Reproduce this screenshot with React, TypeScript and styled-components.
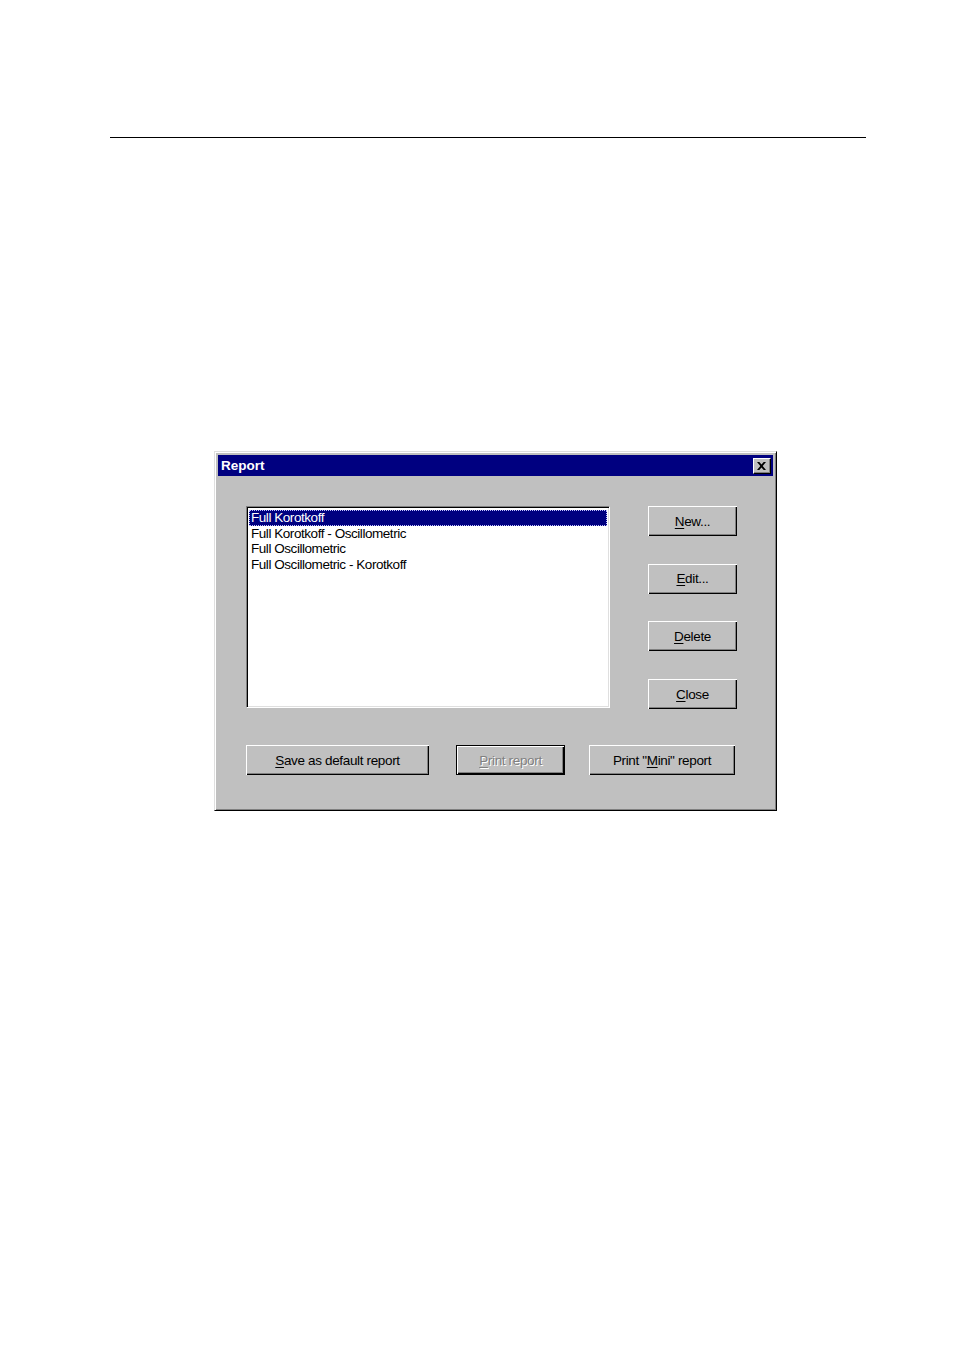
import React from 'react'
import styled, { createGlobalStyle } from 'styled-components'

const GlobalStyle = createGlobalStyle`
  html, body {
    margin: 0;
    padding: 0;
    background: #ffffff;
  }
  body {
    font-family: "Liberation Sans", Arial, sans-serif;
  }
`

const Page = styled.div`
  width: 954px;
  height: 1351px;
  padding-top: 137px;
  box-sizing: border-box;
  display: flex;
  flex-direction: column;
  align-items: flex-start;
`

const Rule = styled.div`
  margin-left: 110px;
  width: 756px;
  height: 1px;
  background: #000;
`

const Dialog = styled.div`
  margin-top: 313px;
  margin-left: 214px;
  width: 563px;
  height: 360px;
  box-sizing: border-box;
  background: #c0c0c0;
  border-top: 1px solid #dfdfdf;
  border-left: 1px solid #dfdfdf;
  border-right: 1px solid #000;
  border-bottom: 1px solid #000;
  box-shadow: inset 1px 1px 0 #fff, inset -1px -1px 0 #808080;
  padding: 3px;
  display: flex;
  flex-direction: column;
`

const TitleBar = styled.div`
  height: 21px;
  background: #000080;
  display: flex;
  align-items: center;
  justify-content: space-between;
  padding: 0 2px 0 3px;
  color: #fff;
  font-weight: bold;
  font-size: 13.5px;
`

const CloseBox = styled.div`
  width: 18px;
  height: 16px;
  box-sizing: border-box;
  background: #c0c0c0;
  border-top: 1px solid #fff;
  border-left: 1px solid #fff;
  border-right: 1px solid #000;
  border-bottom: 1px solid #000;
  box-shadow: inset -1px -1px 0 #808080;
  display: flex;
  align-items: center;
  justify-content: center;
  padding-right: 1px;
`

const Body = styled.div`
  flex: 1;
  padding: 30px 0 0 28px;
  display: flex;
  flex-direction: column;
`

const TopRow = styled.div`
  display: flex;
  align-items: flex-start;
`

const ListBox = styled.div`
  width: 364px;
  height: 202px;
  box-sizing: border-box;
  background: #fff;
  border-top: 1px solid #808080;
  border-left: 1px solid #808080;
  border-right: 1px solid #fff;
  border-bottom: 1px solid #fff;
  box-shadow: inset 1px 1px 0 #000, inset -1px -1px 0 #dfdfdf;
  padding: 3px 2px;
`

const ListItem = styled.div<{ $selected?: boolean }>`
  height: 15.7px;
  line-height: 15px;
  padding-left: 2px;
  font-size: 13.5px;
  letter-spacing: -0.45px;
  white-space: nowrap;
  box-sizing: border-box;
  color: ${p => (p.$selected ? '#fff' : '#000')};
  background: ${p => (p.$selected ? '#000080' : 'transparent')};
  outline: ${p => (p.$selected ? '1px dotted #c0c0ff' : 'none')};
  outline-offset: -1px;
`

const SideButtons = styled.div`
  margin-left: 38px;
  display: flex;
  flex-direction: column;
  gap: 27.7px;
`

const Button = styled.div<{ $width: number; $default?: boolean; $disabled?: boolean }>`
  width: ${p => p.$width}px;
  height: 30px;
  box-sizing: border-box;
  background: #c0c0c0;
  display: flex;
  align-items: center;
  justify-content: center;
  font-size: 13.5px;
  letter-spacing: -0.35px;
  white-space: nowrap;
  color: ${p => (p.$disabled ? '#808080' : '#000')};
  text-shadow: ${p => (p.$disabled ? '1px 1px 0 #fff' : 'none')};
  border: ${p => (p.$default ? '1px solid #000' : 'none')};
  box-shadow: inset 1px 1px 0 #fff, inset -1px -1px 0 #000, inset -2px -2px 0 #808080;
`

const BottomRow = styled.div`
  margin-top: 36px;
  display: flex;
  align-items: flex-start;
`

const Key = styled.span`
  text-decoration: underline;
  text-underline-offset: 2px;
`

const App: React.FC = () => {
  const items = [
    'Full Korotkoff',
    'Full Korotkoff - Oscillometric',
    'Full Oscillometric',
    'Full Oscillometric - Korotkoff',
  ]

  return (
    <Page>
      <GlobalStyle />
      <Rule />
      <Dialog>
        <TitleBar>
          <span>Report</span>
          <CloseBox>
            <svg width="9" height="8" viewBox="0 0 9 8">
              <path d="M0 0h2.3l2.2 2.5L6.7 0H9L5.7 4 9 8H6.7L4.5 5.5 2.3 8H0l3.3-4z" fill="#000" />
            </svg>
          </CloseBox>
        </TitleBar>
        <Body>
          <TopRow>
            <ListBox>
              {items.map((item, i) => (
                <ListItem key={item} $selected={i === 0}>
                  {item}
                </ListItem>
              ))}
            </ListBox>
            <SideButtons>
              <Button $width={89}>
                <Key>N</Key>ew...
              </Button>
              <Button $width={89}>
                <Key>E</Key>dit...
              </Button>
              <Button $width={89}>
                <Key>D</Key>elete
              </Button>
              <Button $width={89}>
                <Key>C</Key>lose
              </Button>
            </SideButtons>
          </TopRow>
          <BottomRow>
            <Button $width={183}>
              <Key>S</Key>ave as default report
            </Button>
            <Button $width={109} $default $disabled style={{ marginLeft: 27 }}>
              <Key>P</Key>rint report
            </Button>
            <Button $width={146} style={{ marginLeft: 24 }}>
              Print "<Key>M</Key>ini" report
            </Button>
          </BottomRow>
        </Body>
      </Dialog>
    </Page>
  )
}

export default App
